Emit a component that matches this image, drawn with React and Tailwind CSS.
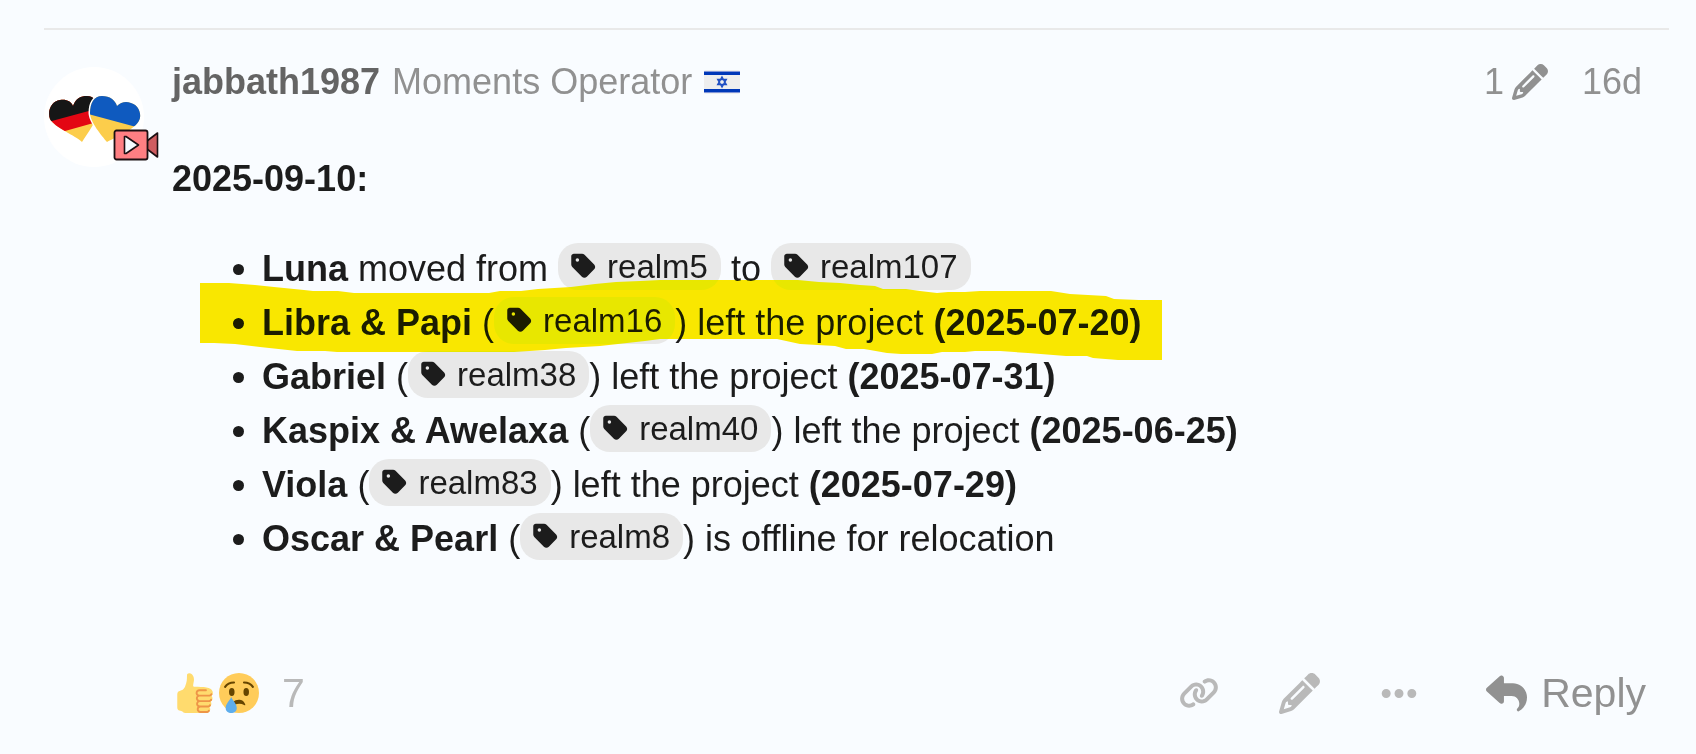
/**
 * App.jsx — a single forum post with its header, body and action bar
 */
import { FaEllipsis, FaLink, FaPencil, FaReply, FaTag } from 'react-icons/fa6'

const changes = [
  { who: 'Gabriel', realm: 'realm38', text: 'left the project', date: '2025-07-31' },
  { who: 'Kaspix & Awelaxa', realm: 'realm40', text: 'left the project', date: '2025-06-25' },
  { who: 'Viola', realm: 'realm83', text: 'left the project', date: '2025-07-29' },
  { who: 'Oscar & Pearl', realm: 'realm8', text: 'is offline for relocation' },
]

/* Two overlapping hearts: German and Ukrainian colours */
function Avatar() {
  return (
    <svg viewBox="0 0 100 100" className="size-[100px] rounded-full bg-white" role="img" aria-label="jabbath1987">
      <defs>
        <clipPath id="heart-de">
          <path d="M38 75C32 69 10 60 6 52C3 43 8 34 16 33C22 32 27 34 29 39C32 31 37 29 43 29C50 29 54 35 54 43C54 53 43 67 38 75Z" />
        </clipPath>
        <clipPath id="heart-ua">
          <path d="M63 75C58 69 46 55 46 46C46 36 50 29 58 29C66 29 71 33 73 39C77 35 82 34 87 36C94 38 97 45 96 51C94 61 74 69 63 75Z" />
        </clipPath>
      </defs>
      <g clipPath="url(#heart-de)">
        <path fill="#fccd4b" d="M0 0H60V80H0Z" />
        <path fill="#e30613" d="M0 0H60V53L0 70Z" />
        <path fill="#161616" d="M0 0H60V40L0 56Z" />
      </g>
      <path
        fill="#fff"
        stroke="#fff"
        strokeWidth="3"
        d="M63 75C58 69 46 55 46 46C46 36 50 29 58 29C66 29 71 33 73 39C77 35 82 34 87 36C94 38 97 45 96 51C94 61 74 69 63 75Z"
      />
      <g clipPath="url(#heart-ua)">
        <path fill="#fccd4b" d="M40 20H100V80H40Z" />
        <path fill="#0f5abf" d="M40 20H100V62L40 46Z" />
      </g>
    </svg>
  )
}

function CameraBadge() {
  return (
    <svg viewBox="0 0 46 32" className="absolute top-[62px] left-[69px] h-8 w-[46px]" aria-hidden="true">
      <path fill="#cf5c60" stroke="#1d1013" strokeWidth="1.6" strokeLinejoin="round" d="M34 12L44.500 4V28L34 20Z" />
      <rect x="1.5" y="1.5" width="33" height="29" rx="2" fill="#ff7f83" stroke="#1d1013" strokeWidth="1.800" />
      <path fill="#f5fbff" stroke="#1d1013" strokeWidth="1.600" strokeLinejoin="round" d="M11.500 7.500L13 7.500L25.500 16L13 24.500L11.500 24.500Z" />
    </svg>
  )
}

function Flag() {
  return (
    <svg viewBox="0 0 36 26" className="h-[26px] w-9" role="img" aria-label="Israel">
      <rect y="1" width="36" height="24" rx="2" fill="#eee" />
      <path fill="#0038b8" d="M0 3H36V6H0ZM0 20H36V23H0Z" />
      <path fill="#8296d8" d="M0 2H36V3H0ZM0 23H36V24H0Z" />
      <path fill="none" stroke="#1f4fc4" strokeWidth="1.500" d="M18 8L22.200 15.400H13.800ZM18 18L13.800 10.600H22.200Z" />
    </svg>
  )
}

function ThumbsUp() {
  return (
    <svg viewBox="0 0 36 36" className="size-10" role="img" aria-label="thumbs up">
      <path fill="#ffdb6e" d="M34.956 17.916c0-.503-.12-.975-.321-1.404-1.341-4.326-7.619-4.01-16.549-4.221-1.493-.035-.639-1.798-.115-5.668.341-2.517-1.282-6.382-4.01-6.382-4.498 0-.171 3.548-4.148 12.322-2.125 4.688-6.875 2.062-6.875 6.771v10.719c0 1.833.18 3.595 2.758 3.885C8.195 34.219 7.633 36 11.238 36h18.044c1.838 0 3.333-1.496 3.333-3.334 0-.762-.267-1.456-.698-2.018 1.02-.571 1.72-1.649 1.72-2.899 0-.76-.266-1.454-.696-2.015 1.023-.57 1.725-1.649 1.725-2.901 0-.909-.368-1.733-.961-2.336.757-.611 1.251-1.535 1.251-2.581z" />
      <path fill="#ee9547" d="M23.02 21.249h8.604c1.17 0 2.268-.626 2.866-1.633.246-.415.109-.952-.307-1.199-.415-.247-.952-.108-1.199.307-.283.479-.806.775-1.361.775h-8.81c-.873 0-1.583-.71-1.583-1.583s.71-1.583 1.583-1.583H28.7c.483 0 .875-.392.875-.875s-.392-.875-.875-.875h-5.888c-1.838 0-3.333 1.495-3.333 3.333 0 1.025.475 1.932 1.205 2.544-.615.605-.998 1.445-.998 2.373 0 1.028.478 1.938 1.212 2.549-.611.604-.99 1.441-.99 2.367 0 1.12.559 2.108 1.409 2.713-.524.589-.852 1.356-.852 2.204 0 1.838 1.495 3.333 3.333 3.333h5.484c1.17 0 2.269-.625 2.867-1.632.247-.415.11-.952-.305-1.199-.416-.245-.953-.11-1.199.305-.285.479-.808.776-1.363.776h-5.484c-.873 0-1.583-.71-1.583-1.583s.71-1.583 1.583-1.583h6.506c1.17 0 2.27-.626 2.867-1.633.247-.416.11-.953-.305-1.199-.419-.251-.954-.11-1.199.305-.289.487-.799.777-1.363.777h-7.063c-.873 0-1.583-.711-1.583-1.584s.71-1.583 1.583-1.583h8.091c1.17 0 2.269-.625 2.867-1.632.247-.415.11-.952-.305-1.199-.417-.246-.953-.11-1.199.305-.289.486-.799.776-1.363.776H23.02c-.873 0-1.583-.71-1.583-1.583s.71-1.584 1.583-1.584z" />
    </svg>
  )
}

function Crying() {
  return (
    <svg viewBox="0 0 36 36" className="size-10" role="img" aria-label="crying">
      <circle cx="18" cy="18" r="18" fill="#ffcc5a" />
      <path fill="none" stroke="#664500" strokeWidth="1.900" strokeLinecap="round" d="M5.500 12.500Q8 8.600 13.500 8.500M30.500 12.500Q28 8.600 22.500 8.500" />
      <ellipse cx="11.500" cy="17" rx="2.500" ry="3.600" fill="#664500" />
      <ellipse cx="24.500" cy="17" rx="2.500" ry="3.600" fill="#664500" />
      <path fill="#664500" d="M13 26C15 23.500 22 22.500 23.700 28.500C23.700 29.200 23.200 29.200 22.600 28.800C20 27.400 17 27.600 14 28.500Z" />
      <path fill="#5dadec" d="M11 21.500C12.500 25 16 27.500 16 31.500C16 34.500 13.800 36 11 36S6 34.500 6 31.500C6 27.500 9.500 25 11 21.500Z" />
    </svg>
  )
}

/* Marker stroke drawn over a list line */
function Marker() {
  return (
    <svg viewBox="0 0 962 80" className="pointer-events-none absolute -top-[14px] -left-[62px] h-20 w-[962px] max-w-none overflow-visible mix-blend-darken" aria-hidden="true">
      <path
        fill="#fae700"
        d="M0 1H29L55 3L74 5L104 8L113 9H138L154 11H289L300 9H321L338 7L371 5L395 2L416 0L440 -1L460 -2H598L619 0L640 1L660 3L675 4L683 7H706L720 9L737 11L748 10H765L780 9H851L870 12L906 14L914 17L939 18H962V78H918L893 76L887 74L866 74L828 71L800 69H775L765 70H742L732 72L701 72L687 71L670 68L664 67H646L635 64L600 62L577 57H460L445 59L400 64L366 66L345 68L314 70H137L125 69H97L60 65L35 62L14 61H0Z"
      />
    </svg>
  )
}

function Realm({ name }) {
  return (
    <a href={`#${name}`} className="-my-1 inline-flex h-[47px] items-center gap-[11px] rounded-[20px] bg-[#e8e8e8] px-[13px] align-[1px] text-[33px] leading-[47px]">
      <FaTag className="h-7 w-[25px]" />
      {name}
    </a>
  )
}

export default function App() {
  return (
    <main className="min-h-screen bg-[#f9fcff] pt-7 pr-[27px] pl-11 font-['Liberation_Sans',Arial,sans-serif] text-[36px] leading-[54px] text-[#1c1c1c]">
      <article className="flex gap-7 border-t-2 border-[#e9e9e9] pt-[25px]">
        <div className="relative mt-3 shrink-0 self-start">
          <Avatar />
          <CameraBadge />
        </div>

        <div className="min-w-0 flex-1">
          {/* Author, title, edit count and age */}
          <header className="flex items-center justify-between pr-[27px] text-[#919191]">
            <div className="flex items-center gap-3">
              <a href="#user" className="font-bold text-[#646464]">jabbath1987</a>
              <span>Moments Operator</span>
              <Flag />
            </div>
            <div className="flex items-center gap-[34px]">
              <button type="button" aria-label="Edit history" className="flex items-center gap-2">
                1 <FaPencil />
              </button>
              <a href="#post">16d</a>
            </div>
          </header>

          {/* Post body */}
          <p className="mt-[43px] font-bold">2025-09-10:</p>
          <ul className="mt-9 list-disc pl-[90px]">
            <li>
              <b>Luna</b> moved from <Realm name="realm5" /> to <Realm name="realm107" />
            </li>
            <li className="relative">
              <b>Libra &amp; Papi</b> (<Realm name="realm16" />) left the project <b>(2025-07-20)</b>
              <Marker />
            </li>
            {changes.map((c) => (
              <li key={c.who}>
                <b>{c.who}</b> (<Realm name={c.realm} />) {c.text} {c.date && <b>({c.date})</b>}
              </li>
            ))}
          </ul>

          {/* Reactions and actions */}
          <footer className="mt-[100px] flex items-center justify-between pr-[23px] text-[41px] text-[#b9b9b9]">
            <button type="button" className="flex items-center gap-[5px] pl-[2px]">
              <ThumbsUp />
              <Crying />
              <span className="pl-[18px]">7</span>
            </button>
            <div className="flex items-center">
              <button type="button" aria-label="Copy link" className="mr-[60px]">
                <FaLink className="h-8 w-10" />
              </button>
              <button type="button" aria-label="Edit" className="mr-[61px]">
                <FaPencil />
              </button>
              <button type="button" aria-label="More" className="mr-[69px]">
                <FaEllipsis className="w-9" />
              </button>
              <button type="button" className="flex items-center gap-[14px] text-[#919191]">
                <FaReply />
                Reply
              </button>
            </div>
          </footer>
        </div>
      </article>
    </main>
  )
}
